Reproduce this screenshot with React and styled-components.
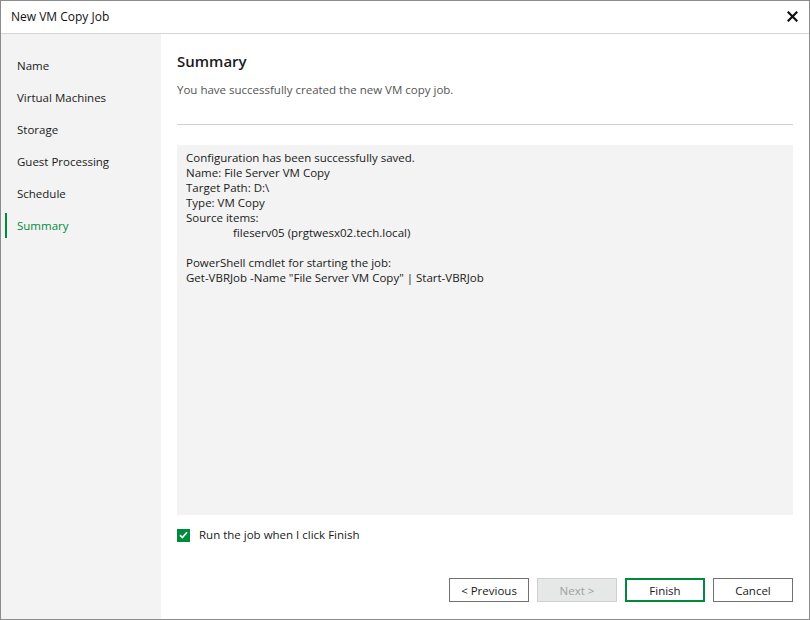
import React from "react";
import styled, { createGlobalStyle } from "styled-components";

const Global = createGlobalStyle`
  html, body {
    margin: 0;
    padding: 0;
    background: #ffffff;
  }
  body {
    font-family: "Open Sans", "Noto Sans", sans-serif;
    font-size: 11.5px;
    color: #1a1a1a;
  }
`;

const steps = [
  "Name",
  "Virtual Machines",
  "Storage",
  "Guest Processing",
  "Schedule",
  "Summary",
];

const summaryLines = [
  "Configuration has been successfully saved.",
  "Name: File Server VM Copy",
  "Target Path: D:\\",
  "Type: VM Copy",
  "Source items:",
];

function App() {
  return (
    <Window>
      <Global />
      <TitleBar>
        <span>New VM Copy Job</span>
        <CloseButton aria-label="Close">
          <svg width="11" height="11" viewBox="0 0 11 11">
            <path d="M1.5 1.5 L9.5 9.5 M9.5 1.5 L1.5 9.5" stroke="#111" strokeWidth="2.2" strokeLinecap="square" />
          </svg>
        </CloseButton>
      </TitleBar>
      <Body>
        <Sidebar>
          {steps.map((s) => (
            <StepItem key={s} $active={s === "Summary"}>
              {s}
            </StepItem>
          ))}
        </Sidebar>
        <Main>
          <Heading>Summary</Heading>
          <Subtitle>You have successfully created the new VM copy job.</Subtitle>
          <Divider />
          <Panel>
            {summaryLines.map((l) => (
              <Line key={l}>{l}</Line>
            ))}
            <Line $indent>fileserv05 (prgtwesx02.tech.local)</Line>
            <Line>&nbsp;</Line>
            <Line>PowerShell cmdlet for starting the job:</Line>
            <Line>Get-VBRJob -Name "File Server VM Copy" | Start-VBRJob</Line>
          </Panel>
          <CheckRow>
            <CheckBox>
              <svg width="9" height="8" viewBox="0 0 9 8">
                <path d="M1 4.2 L3.4 6.5 L8 1.2" stroke="#fff" strokeWidth="1.6" fill="none" />
              </svg>
            </CheckBox>
            Run the job when I click Finish
          </CheckRow>
          <Footer>
            <Button>&lt; Previous</Button>
            <Button disabled>Next &gt;</Button>
            <Button $primary>Finish</Button>
            <Button>Cancel</Button>
          </Footer>
        </Main>
      </Body>
    </Window>
  );
}

const Window = styled.div`
  width: 810px;
  height: 620px;
  box-sizing: border-box;
  border: 1px solid #8c8c8c;
  display: flex;
  flex-direction: column;
  background: #fff;
`;

const TitleBar = styled.div`
  height: 32px;
  flex: none;
  border-bottom: 1px solid #d5d5d5;
  display: flex;
  align-items: center;
  justify-content: space-between;
  padding: 0 10px 1px;
  box-sizing: border-box;
  height: 33px;
  font-size: 12px;
  color: #111;
`;

const CloseButton = styled.div`
  display: flex;
  align-items: center;
  padding-right: 1px;
`;

const Body = styled.div`
  flex: 1;
  display: flex;
  min-height: 0;
`;

const Sidebar = styled.div`
  width: 160px;
  flex: none;
  background: #f2f3f2;
  padding-top: 19px;
  box-sizing: border-box;
`;

const StepItem = styled.div`
  height: 32px;
  line-height: 26px;
  padding-left: 16px;
  position: relative;
  color: ${(p) => (p.$active ? "#008a3e" : "#1a1a1a")};
  &::before {
    content: "";
    display: ${(p) => (p.$active ? "block" : "none")};
    position: absolute;
    left: 4px;
    top: 0;
    width: 2px;
    height: 25px;
    background: #008a3e;
  }
`;

const Main = styled.div`
  flex: 1;
  display: flex;
  flex-direction: column;
  padding: 16px 16px 17px 16px;
  min-width: 0;
`;

const Heading = styled.div`
  font-size: 15px;
  font-weight: 600;
  color: #1a1a1a;
  line-height: 22px;
`;

const Subtitle = styled.div`
  margin-top: 10px;
  color: #555;
  line-height: 16px;
`;

const Divider = styled.div`
  margin-top: 26px;
  height: 1px;
  background: #d2d2d2;
`;

const Panel = styled.div`
  margin-top: 20px;
  background: #f2f3f2;
  height: 370px;
  padding: 5px 9px;
  box-sizing: border-box;
`;

const Line = styled.div`
  line-height: 15px;
  padding-left: ${(p) => (p.$indent ? "47px" : "0")};
  white-space: pre;
`;

const CheckRow = styled.div`
  margin-top: 12px;
  display: flex;
  align-items: center;
  gap: 9px;
  line-height: 16px;
`;

const CheckBox = styled.span`
  width: 13px;
  height: 13px;
  background: #008a3e;
  display: inline-flex;
  align-items: center;
  justify-content: center;
`;

const Footer = styled.div`
  margin-top: auto;
  display: flex;
  justify-content: flex-end;
  gap: 8px;
`;

const Button = styled.button`
  width: 80px;
  height: 24px;
  box-sizing: border-box;
  font-family: inherit;
  font-size: 11.5px;
  background: ${(p) => (p.disabled ? "#e6e7e7" : "#fff")};
  color: ${(p) => (p.disabled ? "#a0a0a0" : "#1a1a1a")};
  border: ${(p) =>
    p.$primary ? "2px solid #008a3e" : p.disabled ? "1px solid #cfcfcf" : "1px solid #707070"};
  padding: 0;
  cursor: default;
`;

export default App;
